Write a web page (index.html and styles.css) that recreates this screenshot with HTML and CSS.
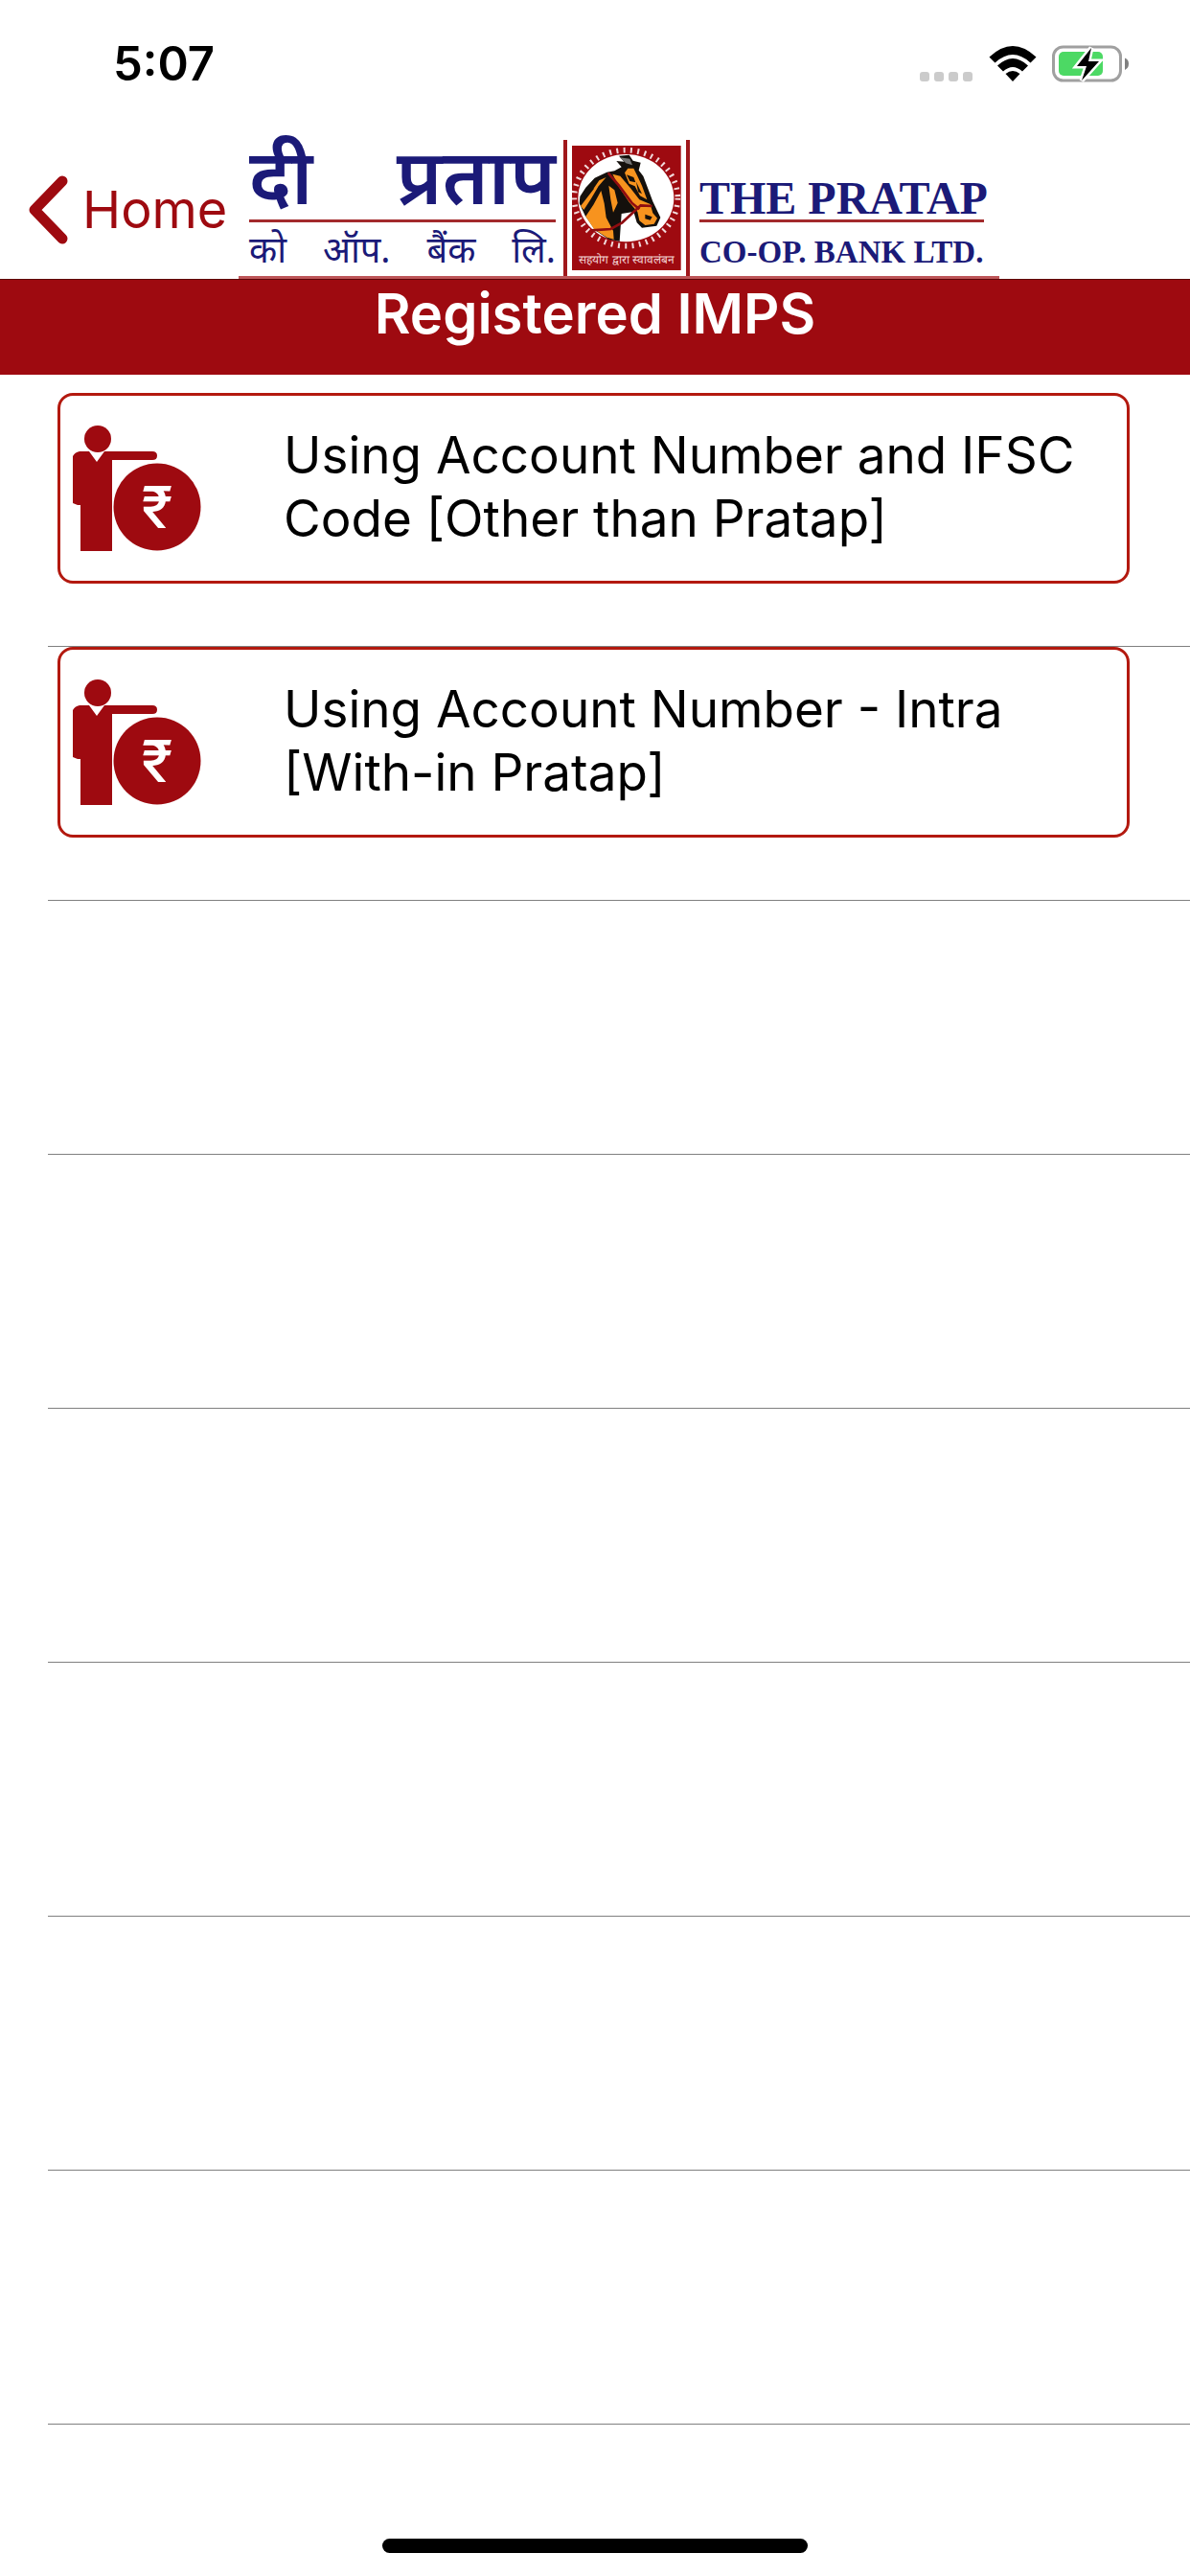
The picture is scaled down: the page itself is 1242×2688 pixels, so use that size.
FILE: index.html
```html
<!DOCTYPE html>
<html lang="en">
<head>
  <meta charset="UTF-8" />
  <meta name="viewport" content="width=device-width, initial-scale=1.0" />
  <title>Registered IMPS</title>
  <link rel="stylesheet" href="styles.css">
</head>
<body>

  <div class="status-bar">
    <span class="time">5:07</span>
    <div class="status-icons">
      <div class="dots"><i></i><i></i><i></i><i></i></div>
      <svg class="wifi" viewBox="0 0 50 38">
        <path d="M0.500 11.500Q25 -11.500 49.500 11.500L43.500 17.500Q25 0.500 6.500 17.500Z" />
        <path d="M9 20.500Q25 5.500 41 20.500L35 26.500Q25 17.500 15 26.500Z" />
        <path d="M17.500 29Q25 23 32.500 29L25 37Z" />
      </svg>
      <svg class="battery" viewBox="0 0 82 39">
        <rect x="1.500" y="2" width="70" height="35" rx="10" fill="none" stroke="#a0a0a0" stroke-width="3" />
        <rect x="7" y="7" width="46" height="25" rx="5" fill="#4cd964" />
        <path d="M76 13.500Q80 15 80 19.500T76 26Z" fill="#808080" />
        <path d="M41 3L26 22H36L31 37L49 17H38Z" fill="#000" stroke="#fff" stroke-width="5" paint-order="stroke" />
      </svg>
    </div>
  </div>

  <header class="nav">
    <button class="back" type="button">
      <svg viewBox="0 0 42 72"><path d="M36 6L7 36L36 66" /></svg>
      <span>Home</span>
    </button>
    <div class="logo">
      <div class="logo-text hindi" lang="hi">
        <div class="big"><span>दी</span> <span>प्रताप</span></div>
        <div class="small"><span>को</span> <span>ऑप.</span> <span>बैंक</span> <span>लि.</span></div>
      </div>
      <div class="emblem">
        <svg viewBox="54 48 348 396">
          <rect x="57" y="51" width="341" height="390" fill="#9e0a10" />
          <ellipse cx="226" cy="215" rx="162" ry="150" fill="none" stroke="#fff" stroke-width="17" stroke-dasharray="6 16" opacity="0.85" />
          <ellipse cx="226" cy="215" rx="150" ry="137" fill="#fff" />
          <!-- horse head -->
          <path d="M80 232L82 210L100 182L128 152L166 134L190 130L212 118L196 99L220 101L204 83L236 80L248 98L272 104L266 128L280 146L292 178L310 226L334 276L322 302L276 308L260 292L250 258L212 264L206 350L172 344L130 316L98 270Z" fill="#14100c" />
          <path d="M100 272L124 236L148 192L158 232L164 276L186 318L188 344L166 338L126 312Z" fill="#f7931e" />
          <path d="M184 140L208 146L240 184L268 220L302 234L310 262L324 278L314 296L286 300L268 286L262 258L236 228L206 184Z" fill="#f7931e" />
          <path d="M222 136L232 122L250 122L262 146L276 176L292 220L270 208L254 178L236 170Z" fill="#f7931e" />
          <path d="M84 240L110 206L138 170L148 164L116 218L94 252ZM124 186L142 160L164 150L140 178ZM172 176L190 190L200 230L186 260L178 220Z" fill="#f7931e" />
          <path d="M228 142L250 150L256 166L238 162ZM258 164L276 202L264 196ZM286 266L308 274L302 284L286 280Z" fill="#14100c" />
          <path d="M206 88L238 92L246 112L226 106Z" fill="#777" />
          <path d="M170 136L204 176L244 230L268 250M308 240L272 238L214 292L178 312L118 316" fill="none" stroke="#8f0c10" stroke-width="8" />
          <text x="228" y="420" text-anchor="middle" lang="hi">सहयोग द्वारा स्वावलंबन</text>
        </svg>
      </div>
      <div class="logo-text english">
        <div class="big">THE PRATAP</div>
        <div class="small">CO-OP. BANK LTD.</div>
      </div>
    </div>
  </header>

  <h1>Registered IMPS</h1>

  <main>
    <ul class="options">
      <li>
        <button class="card" type="button">
          <svg viewBox="0 0 134 131">
            <circle cx="26" cy="14" r="14" />
            <path d="M7 27H17L25 38L33 27H83Q88 27 88 31.500T83 36H41V131H8V83H5L0 81V32Q2 28 7 27Z" />
            <circle cx="88" cy="85" r="45.500" />
            <text x="88" y="107" text-anchor="middle">₹</text>
          </svg>
          <span>Using Account Number and IFSC Code [Other than Pratap]</span>
        </button>
      </li>
      <li>
        <button class="card" type="button">
          <svg viewBox="0 0 134 131">
            <circle cx="26" cy="14" r="14" />
            <path d="M7 27H17L25 38L33 27H83Q88 27 88 31.500T83 36H41V131H8V83H5L0 81V32Q2 28 7 27Z" />
            <circle cx="88" cy="85" r="45.500" />
            <text x="88" y="107" text-anchor="middle">₹</text>
          </svg>
          <span>Using Account Number - Intra [With-in Pratap]</span>
        </button>
      </li>
      <li></li>
      <li></li>
      <li></li>
      <li></li>
      <li></li>
      <li></li>
    </ul>
  </main>

  <div class="home-indicator"></div>

</body>
</html>
```
FILE: styles.css
```css
* {
  box-sizing: border-box;
}

body {
  margin: 0;
  min-height: 100vh;
  display: flex;
  flex-direction: column;
  font-family: Inter, Roboto, sans-serif;
  background: #fff;
  color: #000;
}

button {
  font: inherit;
  background: none;
  border: none;
  padding: 0;
  cursor: pointer;
}

.status-bar {
  display: flex;
  justify-content: space-between;
  align-items: center;
  height: 132px;
  padding: 0 62px 0 118px;
}

.time {
  font-size: 49px;
  font-weight: 600;
}

.status-icons {
  display: flex;
  align-items: flex-end;
}

.dots {
  display: flex;
  gap: 5px;
  margin: 0 17px 1px 0;
}

.dots i {
  width: 10px;
  height: 10px;
  border-radius: 3px;
  background: #cbcbcb;
}

.wifi {
  width: 50px;
  height: 38px;
  margin-right: 16px;
}

.battery {
  width: 82px;
  height: 39px;
}

.nav {
  display: flex;
  height: 159px;
  padding: 14px 0 0 29px;
}

.back {
  display: flex;
  align-items: center;
  gap: 15px;
  width: 220px;
  color: #9e0a10;
  font-size: 54px;
}

.back svg {
  width: 42px;
  height: 72px;
  fill: none;
  stroke: currentColor;
  stroke-width: 11;
  stroke-linecap: round;
  stroke-linejoin: round;
}

.logo {
  display: flex;
  width: 794px;
  border-bottom: 3px solid #bd5558;
}

.logo-text {
  color: #1b1a78;
  white-space: nowrap;
}

.logo-text .big {
  display: flex;
  align-items: flex-end;
  justify-content: space-between;
  height: 86px;
  border-bottom: 3px solid #a32a2c;
}

.hindi {
  flex: 1;
  padding: 0 8px 0 11px;
  font-family: "Noto Sans Devanagari", "Noto Sans", sans-serif;
}

.hindi .big {
  font-size: 80px;
  line-height: 70px;
  font-weight: 600;
}

.hindi .small {
  display: flex;
  justify-content: space-between;
  font-size: 38px;
  line-height: 66px;
}

.english {
  width: 323px;
  padding: 0 16px 0 10px;
  font-family: "Liberation Serif", serif;
  font-weight: bold;
}

.english .big {
  font-size: 48px;
  line-height: 44px;
}

.english .small {
  font-size: 33px;
  line-height: 62px;
}

.emblem {
  padding: 5px 4px 0;
  border-left: 4px solid #a0181c;
  border-right: 4px solid #a0181c;
}

.emblem svg {
  display: block;
  width: 116px;
  height: 132px;
}

.emblem text {
  fill: #f3d5d5;
  font-size: 36px;
}

h1 {
  margin: 0;
  height: 100px;
  border-top: 1px solid #5c0508;
  background: #9e0a10;
  color: #fff;
  font-size: 58px;
  font-weight: 600;
  line-height: 70px;
  text-align: center;
}

.options {
  margin: 19px 0 0;
  padding: 0 0 0 50px;
  list-style: none;
}

.options li {
  height: 265px;
  padding: 0 63px 0 10px;
  border-bottom: 1px solid #808080;
}

.card {
  display: flex;
  align-items: center;
  gap: 86px;
  width: 100%;
  height: 199px;
  padding: 0 24px 0 13px;
  border: 3px solid #b3190f;
  border-radius: 16px;
  color: #000;
  font-size: 53px;
  line-height: 66px;
  text-align: left;
}

.card span {
  padding-bottom: 4px;
}

.card svg {
  flex: none;
  width: 134px;
  height: 131px;
  fill: #9e0a10;
}

.card text {
  fill: #fff;
  font-size: 60px;
  font-weight: 500;
}

.home-indicator {
  width: 444px;
  height: 15px;
  margin: auto auto 24px;
  border-radius: 8px;
  background: #000;
}
```
